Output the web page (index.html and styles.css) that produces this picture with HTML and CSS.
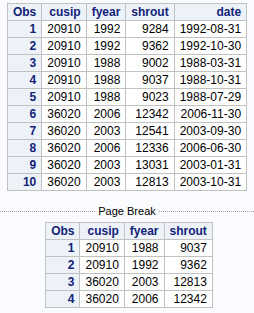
FILE: index.html
```html
<!DOCTYPE html>
<html>
<head>
<meta charset="utf-8">
<link rel="stylesheet" href="styles.css">
</head>
<body>
<div class="page">
  <table class="data">
    <thead>
      <tr><th>Obs</th><th>cusip</th><th>fyear</th><th>shrout</th><th>date</th></tr>
    </thead>
    <tbody>
      <tr><th>1</th><td>20910</td><td>1992</td><td>9284</td><td>1992-08-31</td></tr>
      <tr><th>2</th><td>20910</td><td>1992</td><td>9362</td><td>1992-10-30</td></tr>
      <tr><th>3</th><td>20910</td><td>1988</td><td>9002</td><td>1988-03-31</td></tr>
      <tr><th>4</th><td>20910</td><td>1988</td><td>9037</td><td>1988-10-31</td></tr>
      <tr><th>5</th><td>20910</td><td>1988</td><td>9023</td><td>1988-07-29</td></tr>
      <tr><th>6</th><td>36020</td><td>2006</td><td>12342</td><td>2006-11-30</td></tr>
      <tr><th>7</th><td>36020</td><td>2003</td><td>12541</td><td>2003-09-30</td></tr>
      <tr><th>8</th><td>36020</td><td>2006</td><td>12336</td><td>2006-06-30</td></tr>
      <tr><th>9</th><td>36020</td><td>2003</td><td>13031</td><td>2003-01-31</td></tr>
      <tr><th>10</th><td>36020</td><td>2003</td><td>12813</td><td>2003-10-31</td></tr>
    </tbody>
  </table>

  <div class="pagebreak"><span class="rule"></span><span class="label">Page Break</span><span class="rule"></span></div>

  <table class="data second">
    <thead>
      <tr><th>Obs</th><th>cusip</th><th>fyear</th><th>shrout</th></tr>
    </thead>
    <tbody>
      <tr><th>1</th><td>20910</td><td>1988</td><td>9037</td></tr>
      <tr><th>2</th><td>20910</td><td>1992</td><td>9362</td></tr>
      <tr><th>3</th><td>36020</td><td>2003</td><td>12813</td></tr>
      <tr><th>4</th><td>36020</td><td>2006</td><td>12342</td></tr>
    </tbody>
  </table>
</div>
</body>
</html>
```
FILE: styles.css
```css
html, body {
  margin: 0;
  padding: 0;
  background: #fafbfe;
}
body {
  font-family: "Liberation Sans", Arial, sans-serif;
  font-size: 12px;
  color: #000;
}
.page {
  display: flex;
  flex-direction: column;
  align-items: center;
  padding-top: 3px;
}
.data {
  border-collapse: collapse;
  border: 1px solid #c1c1c1;
  background: #fff;
}
.data th, .data td {
  border: 1px solid #c1c1c1;
  padding: 0 5px;
  height: 16px;
  line-height: 14px;
  text-align: right;
  white-space: nowrap;
}
.data th {
  background: #edf2f9;
  color: #112277;
  font-weight: bold;
}
.data td {
  background: #fff;
}
.pagebreak {
  align-self: stretch;
  display: flex;
  align-items: center;
  margin-top: 13px;
  margin-bottom: 4px;
  height: 14px;
}
.pagebreak .rule {
  flex: 1;
  border-top: 1px dotted #a0a0a0;
}
.pagebreak .label {
  font-size: 11px;
  color: #000;
  padding: 0 3px;
}
.second {
  margin-left: 4px;
}
```
